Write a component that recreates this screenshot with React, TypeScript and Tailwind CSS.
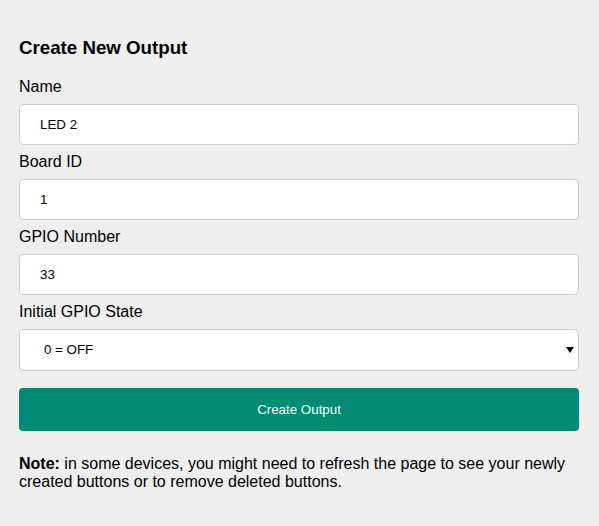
const fields = [
  { label: 'Name', value: 'LED 2' },
  { label: 'Board ID', value: '1' },
  { label: 'GPIO Number', value: '33' },
]

export default function App() {
  return (
    <div className="min-h-[526px] bg-[#eeeeee] pl-[19px] pr-[20px] pt-[37px] pb-8 text-black" style={{ fontFamily: '"Liberation Sans", Arial, sans-serif' }}>
      <h3 className="text-[18.72px] font-bold leading-[21px] mb-[20px]">Create New Output</h3>

      {fields.map(({ label, value }) => (
        <div key={label}>
          <label className="block text-[16px] leading-[18px]">{label}</label>
          <input
            type="text"
            defaultValue={value}
            className="block w-full h-[41px] mt-[8px] mb-[8px] px-[20px] bg-white border border-[#cccccc] rounded-[4px] text-[13.33px] outline-none"
          />
        </div>
      ))}

      <label className="block text-[16px] leading-[18px]">Initial GPIO State</label>
      <div className="relative mt-[8px]">
        <select className="block w-full h-[42px] pl-[24px] pr-8 bg-white border border-[#cccccc] rounded-[4px] text-[13.33px] appearance-none outline-none">
          <option>0 = OFF</option>
          <option>1 = ON</option>
        </select>
        <svg className="absolute right-[5px] top-[18px] pointer-events-none" width="8" height="6" viewBox="0 0 8 6">
          <path d="M0 0h8L4 6z" fill="#000" />
        </svg>
      </div>

      <button className="block w-full h-[43px] mt-[17px] bg-[#008b74] text-white text-[13.33px] rounded-[4px]">
        Create Output
      </button>

      <p className="mt-[24px] text-[16px] leading-[18.4px]">
        <b>Note:</b> in some devices, you might need to refresh the page to see your newly created buttons or to remove deleted buttons.
      </p>
    </div>
  )
}
